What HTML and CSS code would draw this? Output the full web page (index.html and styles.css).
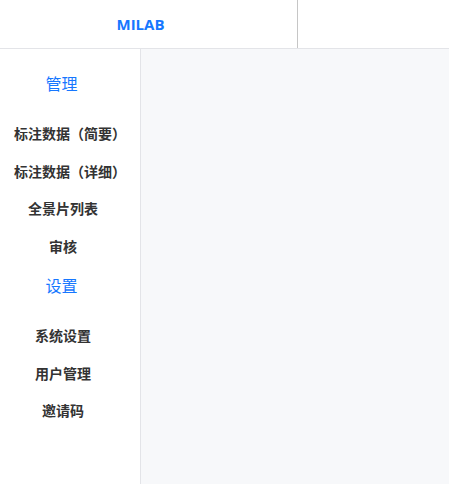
FILE: index.html
```html
<!DOCTYPE html>
<html lang="zh">
<head>
<meta charset="utf-8">
<link rel="stylesheet" href="styles.css">
</head>
<body>
<header class="header">
  <div class="brand">MILAB</div>
  <div class="header-rest"></div>
</header>
<div class="layout">
  <nav class="sidebar">
    <div class="group">管理</div>
    <div class="item">标注数据（简要）</div>
    <div class="item">标注数据（详细）</div>
    <div class="item">全景片列表</div>
    <div class="item">审核</div>
    <div class="group">设置</div>
    <div class="item">系统设置</div>
    <div class="item">用户管理</div>
    <div class="item">邀请码</div>
  </nav>
  <main class="main"></main>
</div>
</body>
</html>
```
FILE: styles.css
```css
html, body {
  margin: 0;
  padding: 0;
  height: 100%;
}
body {
  font-family: "Open Sans", "Noto Sans CJK SC", sans-serif;
  background: #ffffff;
  display: flex;
  flex-direction: column;
  overflow: hidden;
}
.header {
  height: 48px;
  display: flex;
  border-bottom: 1px solid #e3e4e8;
  flex-shrink: 0;
}
.brand {
  width: 298px;
  box-sizing: border-box;
  padding-right: 16px;
  border-right: 1px solid #c6c6c6;
  display: flex;
  align-items: center;
  justify-content: center;
  color: #1677ff;
  font-weight: 700;
  font-size: 15px;
}
.header-rest {
  flex: 1;
}
.layout {
  flex: 1;
  display: flex;
}
.sidebar {
  width: 141px;
  box-sizing: border-box;
  border-right: 1px solid #e3e4e8;
  padding: 14px 28px 0 14px;
  font-family: "Noto Sans CJK SC", sans-serif;
}
.group {
  color: #1677ff;
  font-size: 16px;
  padding: 9px 3px 21px 0;
  height: 22px;
  line-height: 22px;
  text-align: center;
  white-space: nowrap;
}
.item {
  color: #333333;
  font-size: 14px;
  font-weight: 700;
  height: 37.5px;
  line-height: 37.5px;
  text-align: center;
  white-space: nowrap;
}
.main {
  flex: 1;
  background: #f7f8fa;
}
```
